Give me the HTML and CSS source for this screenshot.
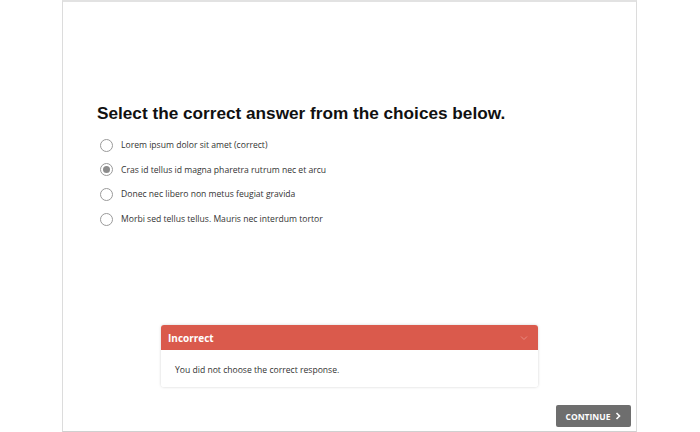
FILE: index.html
```html
<!DOCTYPE html>
<html>
<head>
<meta charset="utf-8">
<link rel="stylesheet" href="styles.css">
</head>
<body>
<div class="stage">
  <div class="content">
    <h1 class="title">Select the correct answer from the choices below.</h1>
    <ul class="choices">
      <li class="choice"><span class="radio"></span><span class="label">Lorem ipsum dolor sit amet (correct)</span></li>
      <li class="choice"><span class="radio checked"></span><span class="label">Cras id tellus id magna pharetra rutrum nec et arcu</span></li>
      <li class="choice"><span class="radio"></span><span class="label">Donec nec libero non metus feugiat gravida</span></li>
      <li class="choice"><span class="radio"></span><span class="label">Morbi sed tellus tellus. Mauris nec interdum tortor</span></li>
    </ul>
  </div>
  <div class="feedback">
    <div class="fb-head">
      <span class="fb-title">Incorrect</span>
      <svg class="fb-chev" width="8" height="6" viewBox="0 0 8 6"><path d="M1 1.5 L4 4.5 L7 1.5" fill="none" stroke="#e88a80" stroke-width="1"/></svg>
    </div>
    <div class="fb-body">You did not choose the correct response.</div>
  </div>
  <div class="footer">
    <button class="continue">CONTINUE <svg width="6" height="8" viewBox="0 0 6 8"><path d="M1.5 1 L4.5 4 L1.5 7" fill="none" stroke="#fff" stroke-width="1.6"/></svg></button>
  </div>
</div>
</body>
</html>
```
FILE: styles.css
```css
html, body {
  margin: 0;
  padding: 0;
  background: #fff;
}
body {
  width: 700px;
  height: 432px;
  overflow: hidden;
}
.stage {
  margin-left: 62px;
  width: 575px;
  height: 432px;
  border: 1px solid #dcdcdc;
  border-top: 2px solid #e2e2e2;
  border-bottom: 1px solid #d0d0d0;
  box-sizing: border-box;
  display: flex;
  flex-direction: column;
}
.content {
  padding: 100px 0 0 34px;
}
.title {
  margin: 0;
  font-family: "Liberation Sans", Arial, sans-serif;
  font-weight: bold;
  font-size: 17.2px;
  line-height: 22px;
  color: #111;
}
.choices {
  list-style: none;
  margin: 9px 0 0 0;
  padding: 0;
}
.choice {
  display: flex;
  align-items: center;
  height: 24.6px;
}
.radio {
  width: 13px;
  height: 13px;
  border: 1px solid #9a9a9a;
  border-radius: 50%;
  margin-left: 3px;
  margin-right: 8px;
  box-sizing: border-box;
  background: #fff;
  display: flex;
  align-items: center;
  justify-content: center;
}
.radio.checked::after {
  content: "";
  width: 7px;
  height: 7px;
  border-radius: 50%;
  background: #8c8c8c;
}
.label {
  font-family: "Open Sans", "Noto Sans", sans-serif;
  font-size: 8.6px;
  color: #333;
}
.feedback {
  margin: auto 0 0 98px;
  width: 377px;
  border-radius: 3px;
  box-shadow: 0 0 3px rgba(0,0,0,0.18);
  overflow: hidden;
}
.fb-head {
  height: 25px;
  background: #da5a4c;
  display: flex;
  align-items: center;
  justify-content: space-between;
  padding: 0 10px 0 7px;
}
.fb-title {
  font-family: "Open Sans", "Noto Sans", sans-serif;
  font-weight: bold;
  font-size: 10px;
  color: #fff;
}
.fb-body {
  height: 37px;
  box-sizing: border-box;
  padding: 14px 0 0 14px;
  font-family: "Open Sans", "Noto Sans", sans-serif;
  font-size: 8.6px;
  color: #333;
  background: #fff;
}
.footer {
  display: flex;
  justify-content: flex-end;
  padding: 18px 5px 4px 0;
}
.continue {
  background: #6e6e6e;
  border: none;
  border-radius: 2px;
  color: #fff;
  font-family: "Open Sans", "Noto Sans", sans-serif;
  font-weight: bold;
  font-size: 8.5px;
  height: 22px;
  width: 75px;
  padding: 0;
  display: flex;
  align-items: center;
  justify-content: center;
  gap: 5px;
}
```
